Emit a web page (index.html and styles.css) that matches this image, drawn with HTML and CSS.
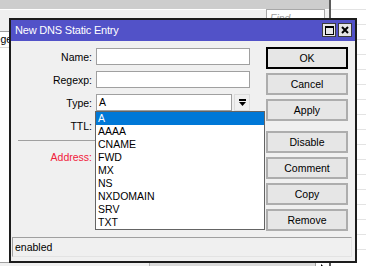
FILE: index.html
```html
<!DOCTYPE html>
<html lang="en">
<head>
  <meta charset="UTF-8" />
  <title>New DNS Static Entry</title>
  <link rel="stylesheet" href="styles.css">
</head>
<body>
  <div class="desktop">
    <!-- Window behind the dialog -->
    <div class="back-window">
      <div class="back-top"></div>
      <div class="back-toolbar">
        <div class="find-box">Find</div>
      </div>
      <div class="back-table">
        <div class="back-head"><span>Regexp</span></div>
      </div>
      <div class="back-scroll">
        <div class="scroll-track"></div>
        <div class="scroll-thumb"></div>
        <div class="scroll-arrow"><span class="arrow-tip"></span></div>
      </div>
    </div>
    <div class="side-table"></div>

    <!-- Dialog -->
    <div class="dialog">
      <div class="title-bar">
        <span class="title">New DNS Static Entry</span>
        <div class="title-buttons">
          <span class="tb-btn">
            <svg width="9" height="9" viewBox="0 0 9 9">
              <rect x="0.5" y="0.5" width="8" height="8" fill="none" stroke="#000" />
              <rect x="0" y="0" width="9" height="2" fill="#000" />
            </svg>
          </span>
          <span class="tb-btn">
            <svg width="8" height="8" viewBox="0 0 8 8">
              <path d="M1 1 L7 7 M7 1 L1 7" stroke="#000" stroke-width="2" />
            </svg>
          </span>
        </div>
      </div>

      <div class="dialog-body">
        <div class="form">
          <div class="row"><label>Name:</label><div class="input"></div></div>
          <div class="row"><label>Regexp:</label><div class="input"></div></div>
          <div class="row">
            <label>Type:</label>
            <div class="select">
              <div class="input">A</div>
              <div class="drop-btn">
                <svg width="7" height="8" viewBox="0 0 7 8">
                  <rect x="0" y="0" width="7" height="2" fill="#000" />
                  <polygon points="0,3 7,3 3.5,7" fill="#000" />
                </svg>
              </div>
            </div>
          </div>
          <div class="row"><label>TTL:</label><div class="input"></div></div>
          <div class="sep"></div>
          <div class="row"><label class="required">Address:</label><div class="input"></div></div>
        </div>

        <div class="buttons">
          <div class="btn default">OK</div>
          <div class="btn">Cancel</div>
          <div class="btn group-end">Apply</div>
          <div class="btn">Disable</div>
          <div class="btn">Comment</div>
          <div class="btn">Copy</div>
          <div class="btn">Remove</div>
        </div>
      </div>

      <div class="status-bar">enabled</div>

      <!-- Open type list -->
      <ul class="type-list">
        <li class="selected">A</li>
        <li>AAAA</li>
        <li>CNAME</li>
        <li>FWD</li>
        <li>MX</li>
        <li>NS</li>
        <li>NXDOMAIN</li>
        <li>SRV</li>
        <li>TXT</li>
      </ul>
    </div>
  </div>
</body>
</html>
```

FILE: styles.css
```css
/* Base */
* {
  box-sizing: border-box;
}

body {
  margin: 0;
  font-family: 'Liberation Sans', Arial, sans-serif;
  font-size: 10.5px;
  color: #000;
  background: #f0f0f0;
}

.desktop {
  position: relative;
  width: 366px;
  height: 266px;
  overflow: hidden;
  display: flex;
}

/* Background window */
.back-window {
  width: 331px;
  display: flex;
  flex-direction: column;
  border-right: 2px solid #5c5c5c;
  background: #f0f0f0;
}

.back-top {
  height: 10px;
  background: #cdcdcd;
  border-bottom: 1px solid #fff;
}

.back-toolbar {
  height: 22px;
  display: flex;
  justify-content: flex-end;
  padding-right: 4px;
  border-bottom: 1px solid #a0a0a0;
}

.find-box {
  width: 59px;
  height: 20px;
  margin-top: -1px;
  padding-left: 3px;
  border: 1px solid #a8a8a8;
  background: #fff;
  color: #a0a0a0;
  font-style: italic;
  line-height: 16px;
}

.back-table {
  flex: 1;
  background: #fff;
}

.back-head {
  height: 16px;
  border-bottom: 1px solid #d9d9d9;
  overflow: hidden;
  white-space: nowrap;
  line-height: 15px;
  margin-bottom: 15px;
  box-shadow: 0 15px 0 -14px #e4e4e4, 0 31px 0 -30px #e4e4e4;
}

.back-head span {
  margin-left: -13px;
}

.back-scroll {
  height: 4px;
  display: flex;
  border-top: 1px solid #a0a0a0;
}

.scroll-track {
  width: 150px;
  background: #f0f0f0;
  border-right: 1px solid #b0b0b0;
}

.scroll-thumb {
  flex: 1;
  background: #dadada;
}

.scroll-arrow {
  width: 14px;
  display: flex;
  justify-content: center;
  padding-top: 1px;
  background: #fff;
  border-left: 1px solid #a0a0a0;
}

.arrow-tip {
  width: 0;
  height: 0;
  border-left: 3px solid #000;
  border-top: 3px solid transparent;
  border-bottom: 3px solid transparent;
}

.side-table {
  flex: 1;
  background:
    repeating-linear-gradient(to bottom, #fff 0 14px, #e3e3e3 14px 15px);
  background-position: 0 -5px;
}

/* Dialog */
.dialog {
  position: absolute;
  left: 9px;
  top: 18px;
  width: 348px;
  height: 245px;
  display: flex;
  flex-direction: column;
  border: 2px solid #1c1c1c;
  background: #f0f0f0;
}

.title-bar {
  height: 21px;
  display: flex;
  align-items: flex-start;
  padding-left: 4px;
  background: #5252c8;
  color: #fff;
}

.title {
  font-size: 11px;
  letter-spacing: -0.2px;
  line-height: 21px;
}

.title-buttons {
  margin-left: auto;
  margin-top: 3px;
  padding-right: 3px;
  display: flex;
  gap: 2px;
}

.tb-btn {
  width: 14px;
  height: 14px;
  display: flex;
  align-items: center;
  justify-content: center;
  border: 1px solid #3c3c3c;
  background: #e6e6e6;
}

.dialog-body {
  flex: 1;
  display: flex;
  padding: 6px 7px 0 0;
}

.form {
  flex: 1;
  padding-top: 1px;
}

.row {
  height: 17px;
  margin-bottom: 6px;
  display: flex;
  align-items: center;
}

.row label {
  width: 81px;
  margin-right: 4px;
  flex-shrink: 0;
  text-align: right;
}

.row label.required {
  color: #f0203a;
}

.input {
  width: 154px;
  height: 17px;
  padding-left: 2px;
  border: 1px solid #a0a0a0;
  background: #fff;
  line-height: 15px;
}

.select {
  width: 154px;
  display: flex;
  gap: 2px;
}

.select .input {
  flex: 1;
  width: auto;
}

.drop-btn {
  width: 16px;
  height: 17px;
  display: flex;
  align-items: center;
  justify-content: center;
  border: 1px solid #dcdcdc;
  background: #f0f0f0;
}

.sep {
  height: 1px;
  margin: 1px 0 7px 7px;
  width: 232px;
  background: #a0a0a0;
}

/* Button column */
.buttons {
  width: 82px;
  display: flex;
  flex-direction: column;
}

.btn {
  height: 22px;
  margin-bottom: 4px;
  border: 2px solid #adadad;
  background: #e6e6e6;
  text-align: center;
  line-height: 18px;
}

.btn.default {
  border-color: #000;
}

.btn.group-end {
  margin-bottom: 10px;
}

/* Status bar */
.status-bar {
  height: 20px;
  margin: 0 3px 4px 1px;
  padding-left: 2px;
  border: 1px solid #a0a0a0;
  border-right-color: #e3e3e3;
  border-bottom-color: #e3e3e3;
  line-height: 18px;
}

/* Open dropdown list */
.type-list {
  position: absolute;
  left: 84px;
  top: 91px;
  width: 170px;
  margin: 0;
  padding: 0;
  list-style: none;
  border: 1px solid #646464;
  background: #fff;
}

.type-list li {
  height: 13px;
  padding-left: 2px;
  line-height: 13px;
}

.type-list li.selected {
  background: #0078d7;
  color: #fff;
}
```
